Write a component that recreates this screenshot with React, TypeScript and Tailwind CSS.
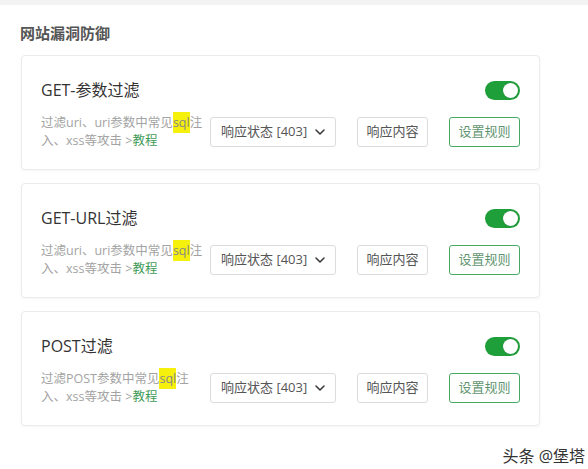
import React from 'react';
import { ChevronDown } from 'lucide-react';

type Rule = {
  title: string;
  line1: [string, string];
  line2: string;
};

const rules: Rule[] = [
  { title: 'GET-参数过滤', line1: ['过滤uri、uri参数中常见', '注'], line2: '入、xss等攻击 ' },
  { title: 'GET-URL过滤', line1: ['过滤uri、uri参数中常见', '注'], line2: '入、xss等攻击 ' },
  { title: 'POST过滤', line1: ['过滤POST参数中常见', '注'], line2: '入、xss等攻击 ' },
];

function Toggle() {
  return (
    <div className="w-[35px] h-[19px] rounded-full bg-[#1f9f3a] flex items-center justify-end pr-[2px]">
      <div className="w-[15px] h-[15px] rounded-full bg-white shadow-[0_0_1px_rgba(0,0,0,0.35)]"></div>
    </div>
  );
}

function RuleCard({ rule }: { rule: Rule }) {
  return (
    <div className="bg-white border border-[#ebebeb] rounded-[4px] shadow-[0_1px_3px_rgba(0,0,0,0.04)] pt-[22px] pb-[19px] px-[19px]">
      <div className="flex items-center justify-between h-6">
        <h3 className="text-[16px] leading-6 text-[#333]">{rule.title}</h3>
        <Toggle />
      </div>
      <div className="flex items-center mt-3 h-9">
        <p className="w-[169px] text-[12.5px] leading-[18px] text-[#a3a3a3]">
          {rule.line1[0]}
          <span className="bg-[#f5f00c] text-[#888] py-[2px]">sql</span>
          {rule.line1[1]}
          <br />
          {rule.line2}
          <span>&gt;</span>
          <span className="text-[#3f9c58]">教程</span>
        </p>
        <div className="w-[126px] h-[30px] border border-[#dcdcdc] rounded-[3px] flex items-center justify-between pl-[10px] pr-[7px] text-[13px] text-[#555]">
          <span>响应状态 [403]</span>
          <ChevronDown className="w-[16px] h-[16px] text-[#333]" strokeWidth={2.25} />
        </div>
        <button className="ml-[21px] w-[71px] h-[30px] border border-[#dcdcdc] rounded-[3px] text-[13px] text-[#555] bg-white">
          响应内容
        </button>
        <button className="ml-[21px] w-[71px] h-[30px] border border-[#47a862] rounded-[3px] text-[13px] text-[#5f9670] bg-white">
          设置规则
        </button>
      </div>
    </div>
  );
}

export default function App() {
  return (
    <div
      className="relative w-[588px] h-[469px] bg-white overflow-hidden"
      style={{ fontFamily: '"Open Sans", "Noto Sans CJK SC", sans-serif' }}
    >
      <div className="h-[5px] bg-[#f3f3f3]"></div>
      <div className="pl-[21px] w-[540px]">
        <h2 className="mt-[17px] ml-[-1px] text-[15px] leading-[22px] font-bold text-[#555]">网站漏洞防御</h2>
        <div className="mt-[11px] flex flex-col gap-[13px]">
          {rules.map((r) => (
            <RuleCard key={r.title} rule={r} />
          ))}
        </div>
      </div>
      <div className="absolute right-[3px] bottom-[1px] text-[16px] text-[#333]" style={{ textShadow: '0 0 2px #fff' }}>
        头条 @堡塔
      </div>
    </div>
  );
}
